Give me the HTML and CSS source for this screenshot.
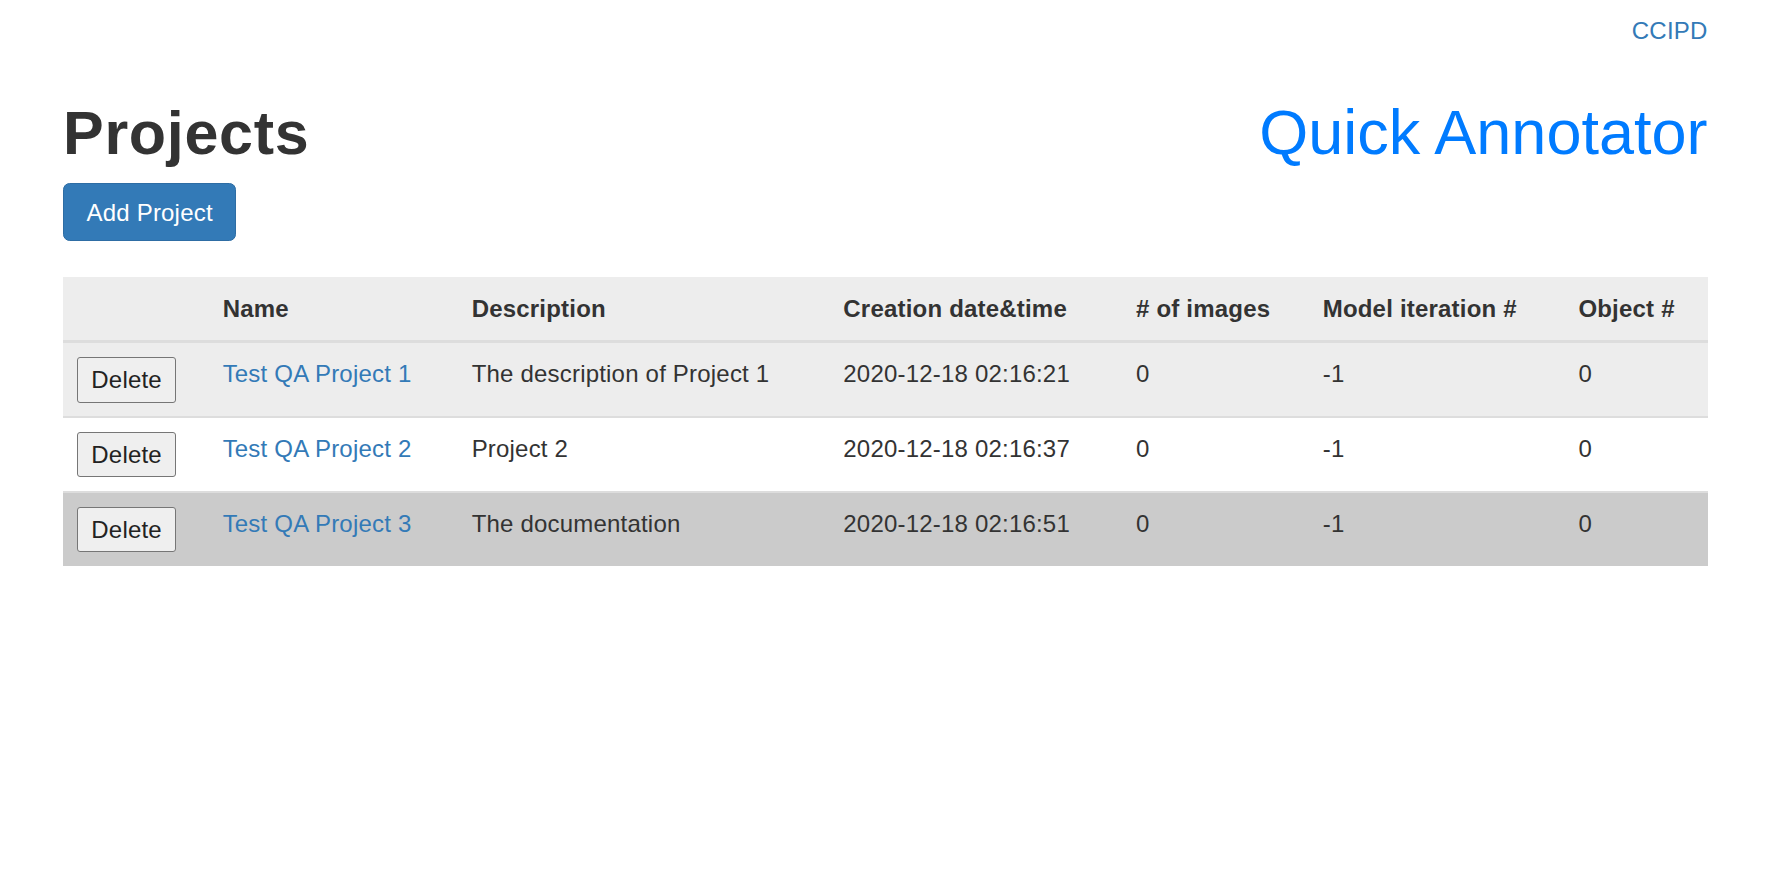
FILE: index.html
```html
<!DOCTYPE html>
<html lang="en">
<head>
<meta charset="utf-8">
<title>Projects - Quick Annotator</title>
<link rel="stylesheet" href="styles.css">
</head>
<body>
<div class="container">
  <div class="topbar"><a class="link" href="#">CCIPD</a></div>
  <div class="titlerow">
    <h1 class="page-title">Projects</h1>
    <h1 class="brand">Quick Annotator</h1>
  </div>
  <button class="btn-primary" type="button">Add Project</button>
  <table class="table">
    <colgroup>
      <col class="col-act">
      <col class="col-name">
      <col class="col-desc">
      <col class="col-date">
      <col class="col-img">
      <col class="col-iter">
      <col class="col-obj">
    </colgroup>
    <thead>
      <tr>
        <th></th>
        <th>Name</th>
        <th>Description</th>
        <th>Creation date&amp;time</th>
        <th># of images</th>
        <th>Model iteration #</th>
        <th>Object #</th>
      </tr>
    </thead>
    <tbody>
      <tr class="row-grey">
        <td><button class="btn-del" type="button">Delete</button></td>
        <td><a class="link" href="#">Test QA Project 1</a></td>
        <td>The description of Project 1</td>
        <td>2020-12-18 02:16:21</td>
        <td>0</td>
        <td>-1</td>
        <td>0</td>
      </tr>
      <tr class="row-white">
        <td><button class="btn-del" type="button">Delete</button></td>
        <td><a class="link" href="#">Test QA Project 2</a></td>
        <td>Project 2</td>
        <td>2020-12-18 02:16:37</td>
        <td>0</td>
        <td>-1</td>
        <td>0</td>
      </tr>
      <tr class="row-dark">
        <td><button class="btn-del" type="button">Delete</button></td>
        <td><a class="link" href="#">Test QA Project 3</a></td>
        <td>The documentation</td>
        <td>2020-12-18 02:16:51</td>
        <td>0</td>
        <td>-1</td>
        <td>0</td>
      </tr>
    </tbody>
  </table>
</div>
</body>
</html>
```

FILE: styles.css
```css
* { box-sizing: border-box; }

html, body {
  margin: 0;
  padding: 0;
  background: #ffffff;
}

body {
  font-family: "Liberation Sans", Arial, Helvetica, sans-serif;
  font-size: 24px;
  line-height: 33.33px;
  letter-spacing: 0.2px;
  color: #333333;
}

.container {
  padding: 0 62.5px 0 63px;
}

.link {
  color: #337ab7;
  text-decoration: none;
}

.topbar {
  padding-top: 13.7px;
  display: flex;
  justify-content: flex-end;
}

.titlerow {
  margin-top: 51.9px;
  display: flex;
  justify-content: space-between;
  align-items: baseline;
}

.page-title {
  margin: 0;
  font-size: 61px;
  line-height: 66px;
  font-weight: bold;
  letter-spacing: 0.7px;
  color: #333333;
}

.brand {
  margin: 0;
  font-size: 63px;
  line-height: 66px;
  font-weight: normal;
  letter-spacing: 0;
  color: #007bff;
}

.btn-primary {
  display: block;
  margin-top: 17.2px;
  font-family: inherit;
  font-size: 24px;
  line-height: 33.33px;
  letter-spacing: 0.2px;
  color: #ffffff;
  background: #337ab7;
  border: 1px solid #2e6da4;
  border-radius: 6.67px;
  padding: 11.5px 22.5px;
  cursor: pointer;
}

.table {
  width: 100%;
  margin-top: 35.6px;
  border-collapse: collapse;
  table-layout: fixed;
}

.col-act { width: 146.3px; }
.col-name { width: 249px; }
.col-desc { width: 371.7px; }
.col-date { width: 292.7px; }
.col-img { width: 186.7px; }
.col-iter { width: 255.7px; }

.table th,
.table td {
  padding: 13.33px;
  text-align: left;
  white-space: nowrap;
}

.table thead tr {
  background: #ededed;
}

.table th {
  font-weight: bold;
  vertical-align: bottom;
  padding-top: 14.8px;
  padding-bottom: 15.3px;
  border-bottom: 3px solid #dddddd;
}

.table td {
  vertical-align: top;
  padding-top: 14px;
  padding-bottom: 13.4px;
  border-top: 2px solid #dddddd;
}

.row-grey { background: #ededed; }
.row-white { background: #ffffff; }
.row-dark { background: #cbcbcb; }

.btn-del {
  font-family: inherit;
  font-size: 24px;
  line-height: 33.33px;
  letter-spacing: 0.2px;
  color: #222222;
  background: #efefef;
  border: 1px solid #767676;
  border-radius: 3px;
  padding: 5px 13px;
  margin: 0 0 0 1px;
  cursor: pointer;
}
```
